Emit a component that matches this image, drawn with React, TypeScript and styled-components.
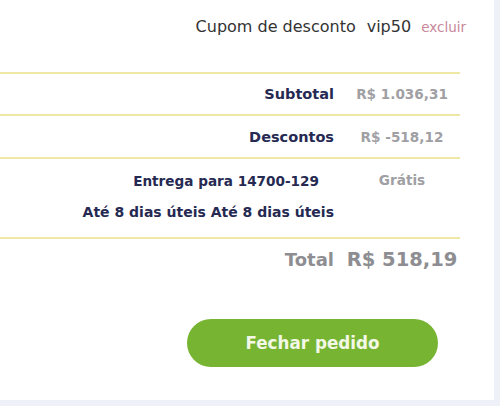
import * as React from "react";
import styled, { createGlobalStyle } from "styled-components";

const GlobalStyle = createGlobalStyle`
  html, body {
    margin: 0;
    padding: 0;
    background: #eef1f7;
  }
  body {
    font-family: "DejaVu Sans", "Noto Sans", sans-serif;
  }
`;

const Card = styled.section`
  width: 494px;
  height: 400px;
  background: #ffffff;
  box-sizing: border-box;
  display: flex;
  flex-direction: column;
`;

const CouponRow = styled.div`
  display: flex;
  justify-content: flex-end;
  align-items: baseline;
  height: 72px;
  padding: 17px 28px 0 0;
  box-sizing: border-box;
  color: #333;
`;

const CouponLabel = styled.span`
  font-size: 16px;
  margin-right: 11px;
`;

const CouponCode = styled.span`
  font-size: 16px;
  margin-right: 10px;
`;

const RemoveLink = styled.a`
  font-size: 13.5px;
  color: #c8879a;
  cursor: pointer;
`;

const Summary = styled.div`
  width: 460px;
  border-top: 2px solid #efe7a6;
`;

const Row = styled.div<{ $height: number }>`
  display: grid;
  grid-template-columns: 1fr 116px;
  height: ${(p) => p.$height}px;
  border-bottom: 2px solid #efe7a6;
  box-sizing: border-box;
  align-items: center;
`;

const Label = styled.div`
  text-align: right;
  padding-right: 10px;
  font-weight: 700;
  font-size: 14.5px;
  color: #262a52;
`;

const Value = styled.div`
  text-align: center;
  font-weight: 700;
  font-size: 13.6px;
  color: #a0a0a4;
`;

const DeliveryRow = styled.div`
  display: grid;
  grid-template-columns: 1fr 116px;
  height: 80px;
  border-bottom: 2px solid #efe7a6;
  box-sizing: border-box;
  padding-top: 14px;
`;

const DeliveryLabels = styled.div`
  display: flex;
  flex-direction: column;
  align-items: flex-end;
  gap: 15px;
  padding-right: 10px;
  font-weight: 700;
  font-size: 14px;
  color: #262a52;
`;

const DeliveryTitle = styled.span`
  font-size: 13.6px;
  padding-right: 15px;
`;

const DeliveryValue = styled(Value)`
  margin-top: -1px;
`;

const TotalRow = styled.div`
  display: grid;
  grid-template-columns: 1fr 116px;
  width: 460px;
  height: 40px;
  align-items: center;
  color: #8e8e92;
  font-weight: 700;
`;

const TotalLabel = styled.div`
  text-align: right;
  padding-right: 10px;
  font-size: 18px;
`;

const TotalValue = styled.div`
  text-align: center;
  font-size: 19.5px;
`;

const Footer = styled.div`
  display: flex;
  padding: 40px 0 0 187px;
`;

const CloseButton = styled.button`
  width: 251px;
  height: 48px;
  border: 0;
  border-radius: 24px;
  background: #76b432;
  color: #f3f8e6;
  font-family: inherit;
  font-weight: 700;
  font-size: 16.8px;
  cursor: pointer;
`;

export default function App() {
  return (
    <>
      <GlobalStyle />
      <Card>
        <CouponRow>
          <CouponLabel>Cupom de desconto</CouponLabel>
          <CouponCode>vip50</CouponCode>
          <RemoveLink>excluir</RemoveLink>
        </CouponRow>
        <Summary>
          <Row $height={42}>
            <Label>Subtotal</Label>
            <Value>R$ 1.036,31</Value>
          </Row>
          <Row $height={43}>
            <Label>Descontos</Label>
            <Value>R$ -518,12</Value>
          </Row>
          <DeliveryRow>
            <DeliveryLabels>
              <DeliveryTitle>Entrega para 14700-129</DeliveryTitle>
              <span>Até 8 dias úteis Até 8 dias úteis</span>
            </DeliveryLabels>
            <DeliveryValue>Grátis</DeliveryValue>
          </DeliveryRow>
        </Summary>
        <TotalRow>
          <TotalLabel>Total</TotalLabel>
          <TotalValue>R$ 518,19</TotalValue>
        </TotalRow>
        <Footer>
          <CloseButton>Fechar pedido</CloseButton>
        </Footer>
      </Card>
    </>
  );
}
